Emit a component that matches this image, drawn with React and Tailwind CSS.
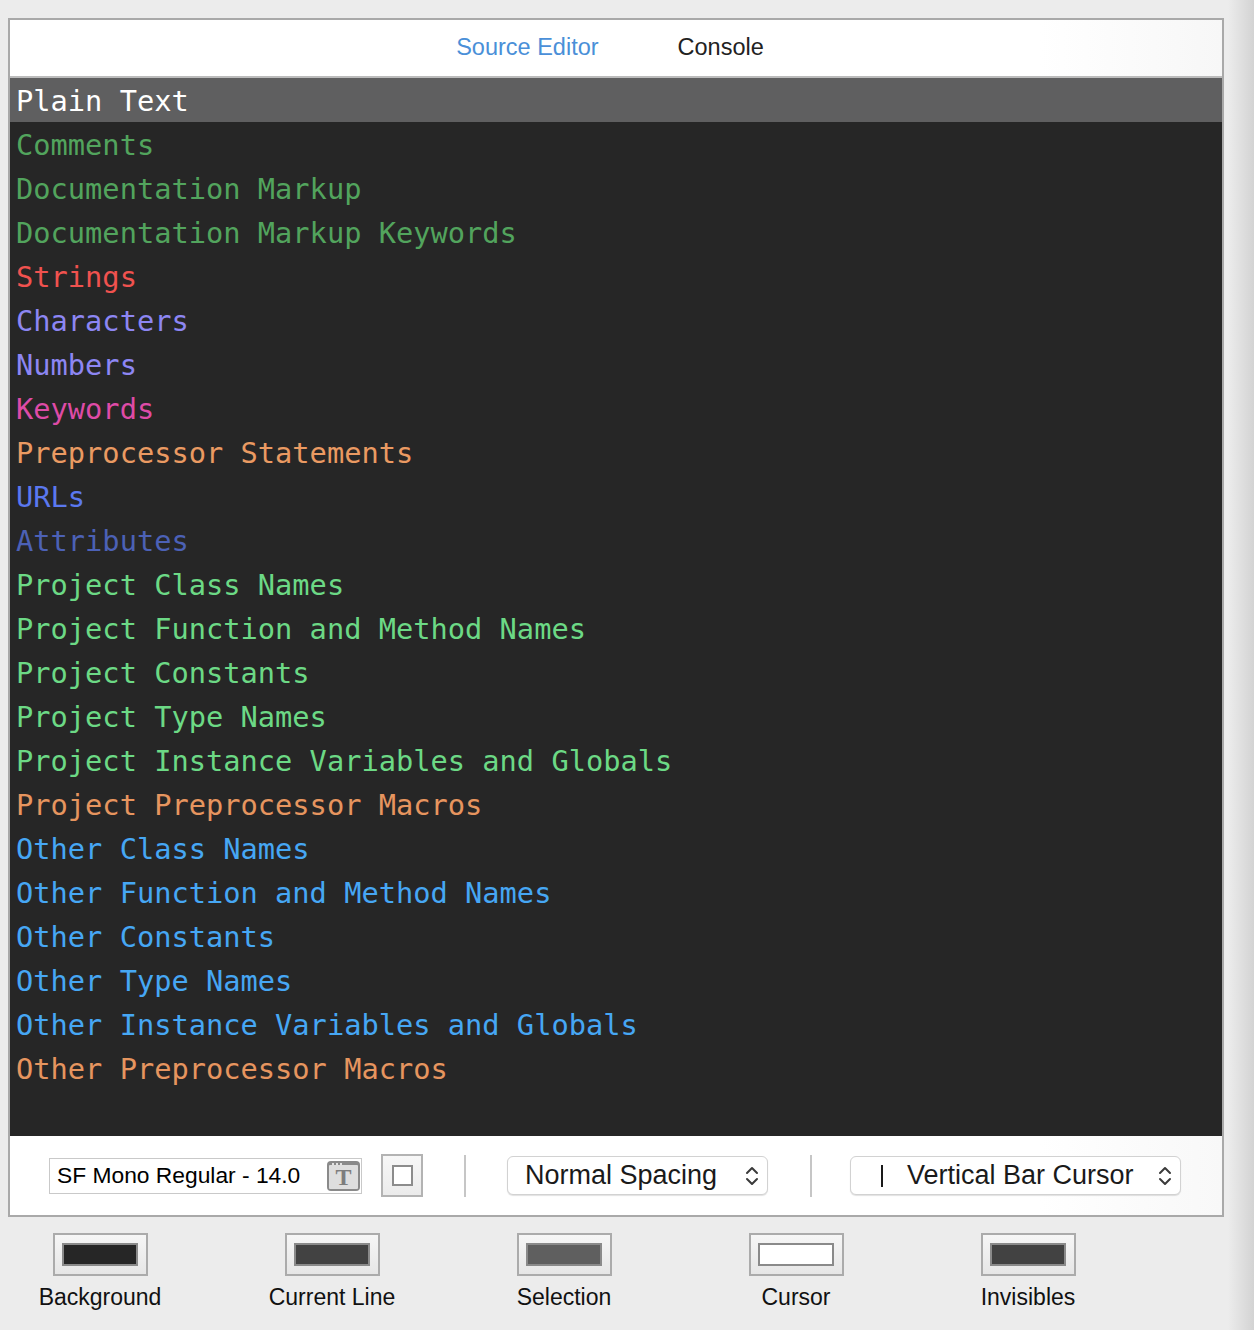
import React from "react";

const rows = [
  ["Comments", "text-[#52a45d]"],
  ["Documentation Markup", "text-[#52a45d]"],
  ["Documentation Markup Keywords", "text-[#52a45d]"],
  ["Strings", "text-[#f0524f]"],
  ["Characters", "text-[#8d86f3]"],
  ["Numbers", "text-[#8d86f3]"],
  ["Keywords", "text-[#de4ba6]"],
  ["Preprocessor Statements", "text-[#ea9a62]"],
  ["URLs", "text-[#5b78ef]"],
  ["Attributes", "text-[#4c61b6]"],
  ["Project Class Names", "text-[#6cd985]"],
  ["Project Function and Method Names", "text-[#6cd985]"],
  ["Project Constants", "text-[#6cd985]"],
  ["Project Type Names", "text-[#6cd985]"],
  ["Project Instance Variables and Globals", "text-[#6cd985]"],
  ["Project Preprocessor Macros", "text-[#e6955f]"],
  ["Other Class Names", "text-[#46a7f4]"],
  ["Other Function and Method Names", "text-[#46a7f4]"],
  ["Other Constants", "text-[#46a7f4]"],
  ["Other Type Names", "text-[#46a7f4]"],
  ["Other Instance Variables and Globals", "text-[#46a7f4]"],
  ["Other Preprocessor Macros", "text-[#e6955f]"],
];

const wells = [
  ["Background", "bg-[#262626]"],
  ["Current Line", "bg-[#424242]"],
  ["Selection", "bg-[#5f5f5f]"],
  ["Cursor", "bg-white"],
  ["Invisibles", "bg-[#424242]"],
];

function Chevrons() {
  return (
    <svg width="16" height="26" viewBox="0 0 16 26" fill="none">
      <path d="M3 10 L8 5 L13 10" stroke="#3a3a3a" strokeWidth="2" strokeLinecap="round" strokeLinejoin="round" />
      <path d="M3 16 L8 21 L13 16" stroke="#3a3a3a" strokeWidth="2" strokeLinecap="round" strokeLinejoin="round" />
    </svg>
  );
}

function FontIcon() {
  return (
    <div className="w-[33px] h-[30px] rounded-[4px] bg-[#8a8a8a] p-[2px] flex flex-col">
      <div className="h-[5px] flex items-center gap-[2px] pl-[3px]">
        <span className="w-[2px] h-[2px] bg-white rounded-full" />
        <span className="w-[2px] h-[2px] bg-white rounded-full" />
        <span className="w-[2px] h-[2px] bg-white rounded-full" />
      </div>
      <div className="flex-1 bg-[#dedede] rounded-[1px] flex items-center justify-center">
        <span className="text-[#7d7d7d] text-[24px] leading-none font-bold" style={{ fontFamily: '"Liberation Serif", "DejaVu Serif", serif' }}>T</span>
      </div>
    </div>
  );
}

export default function App() {
  return (
    <div
      className="min-h-[1330px] w-[1254px] bg-[linear-gradient(to_right,#ececec_0px,#ececec_1228px,#d3d3d3_1254px)] pt-[18px] pl-[8px]"
      style={{ fontFamily: '"Liberation Sans", Arial, sans-serif' }}
    >
      <div className="w-[1216px] border-2 border-[#a9a9a9] flex flex-col">
        {/* Header tabs */}
        <div className="h-[58px] bg-[linear-gradient(to_right,#ffffff_85%,#f7f7f7)] border-b-2 border-[#bcbcbc] flex items-center justify-center gap-[79px] pr-[12px] text-[23.5px]">
          <span className="text-[#4a8fd8]">Source Editor</span>
          <span className="text-[#222222]">Console</span>
        </div>

        {/* Syntax list */}
        <div
          className="bg-[#262626] pb-[2px] flex flex-col text-[28.7px]"
          style={{ fontFamily: '"DejaVu Sans Mono", "Liberation Mono", monospace' }}
        >
          <div className="h-[44px] bg-[#5f5f60] text-white flex items-center pt-[3px] pl-[6px] whitespace-pre">Plain Text</div>
          {rows.map(([label, color]) => (
            <div key={label} className={`h-[44px] flex items-center pt-[3px] pl-[6px] whitespace-pre ${color}`}>
              {label}
            </div>
          ))}
          <div className="h-[44px]" />
        </div>

        {/* Toolbar */}
        <div className="h-[79px] bg-[linear-gradient(to_right,#ffffff_85%,#f8f8f8)] flex items-center pl-[39px] text-black">
          <div className="w-[313px] h-[36px] border border-[#c9c9c9] bg-white flex items-center pl-[7px] pr-[1px] justify-between">
            <span className="text-[22.8px] leading-none">SF Mono Regular - 14.0</span>
            <FontIcon />
          </div>
          <div className="ml-[19px] w-[42px] h-[43px] border-2 border-[#b3b3b3] bg-[linear-gradient(#f7f7f7,#ebebeb)] flex items-center justify-center">
            <div className="w-[21px] h-[21px] border-2 border-[#8c8c8c] bg-white" />
          </div>
          <div className="ml-[41px] w-[2px] h-[42px] bg-[#c6c6c6]" />
          <div className="ml-[41px] w-[261px] h-[39px] rounded-[6px] border border-[#d2d2d2] bg-white shadow-[0_1px_1px_rgba(0,0,0,0.12)] flex items-center pl-[17px] pr-[7px] justify-between">
            <span className="text-[27px] leading-none text-[#1a1a1a]">Normal Spacing</span>
            <Chevrons />
          </div>
          <div className="ml-[42px] w-[2px] h-[42px] bg-[#c6c6c6]" />
          <div className="ml-[38px] w-[331px] h-[39px] rounded-[6px] border border-[#d2d2d2] bg-white shadow-[0_1px_1px_rgba(0,0,0,0.12)] flex items-center pl-[30px] pr-[7px]">
            <span className="w-[2px] h-[22px] bg-[#1a1a1a]" />
            <span className="ml-[24px] text-[27px] leading-none text-[#1a1a1a]">Vertical Bar Cursor</span>
            <span className="ml-auto flex"><Chevrons /></span>
          </div>
        </div>
      </div>

      {/* Color wells */}
      <div className="flex gap-[52px] pl-[2px] mt-[16px]">
        {wells.map(([label, color]) => (
          <div key={label} className="w-[180px] flex flex-col items-center">
            <div className="w-[95px] h-[43px] border-2 border-[#ababab] bg-[linear-gradient(#f6f6f6,#e6e6e6)] flex items-center justify-center">
              <div className={`w-[76px] h-[23px] border-2 border-[#8a8a8a] ${color}`} />
            </div>
            <span className="mt-[8px] text-[23px] leading-[26px] text-[#111111]">{label}</span>
          </div>
        ))}
      </div>
    </div>
  );
}
